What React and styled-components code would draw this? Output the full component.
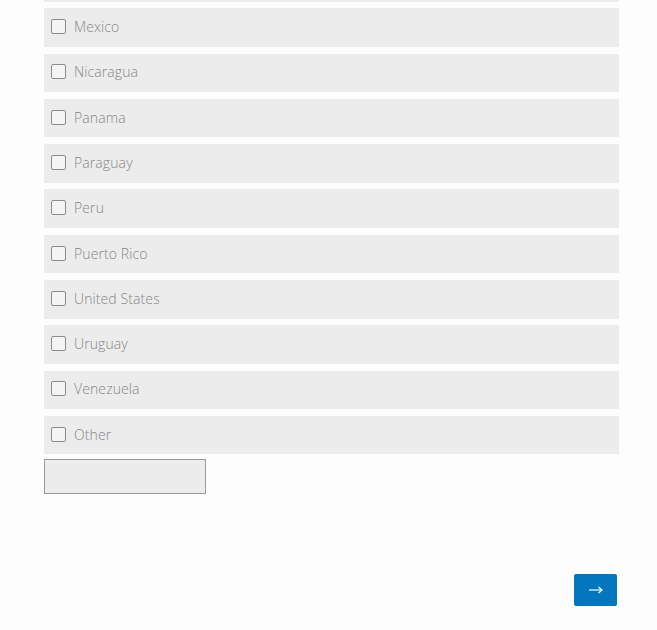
import React from 'react';
import styled, { createGlobalStyle } from 'styled-components';

const GlobalStyle = createGlobalStyle`
  html, body {
    margin: 0;
    padding: 0;
    background: #fdfdfd;
    overflow: hidden;
  }
  body {
    font-family: "Open Sans", "Noto Sans", sans-serif;
  }
`;

const Page = styled.div`
  width: 657px;
  height: 630px;
  padding-left: 44px;
  box-sizing: border-box;
  overflow: hidden;
`;

const Form = styled.div`
  width: 575px;
  margin-top: -37px;
  display: flex;
  flex-direction: column;
`;

const Options = styled.div`
  display: flex;
  flex-direction: column;
  gap: 6.8px;
`;

const Option = styled.label`
  display: flex;
  align-items: center;
  height: 38.5px;
  padding: 0 0 2px 7px;
  background: #ececec;
  box-sizing: border-box;
`;

const Box = styled.span`
  width: 13px;
  height: 13px;
  border: 1px solid #8c8c8c;
  border-radius: 2px;
  background: #f4f4f4;
  margin-right: 8px;
  flex-shrink: 0;
`;

const OptionText = styled.span`
  font-size: 14px;
  font-weight: 300;
  color: #878787;
  letter-spacing: 0.1px;
`;

const OtherInput = styled.input`
  margin-top: 5px;
  width: 162px;
  height: 35px;
  box-sizing: border-box;
  border: 1px solid #9a9a9a;
  background: #ececec;
  outline: none;
`;

const Footer = styled.div`
  display: flex;
  justify-content: flex-end;
  padding-right: 2px;
  margin-top: 80px;
`;

const NextButton = styled.button`
  display: flex;
  align-items: center;
  justify-content: center;
  width: 43px;
  height: 31.5px;
  border: none;
  border-radius: 2px;
  background: #0077bf;
  padding: 0;
  cursor: pointer;
`;

const ArrowIcon = () => (
  <svg width="14" height="8" viewBox="0 0 14 8" fill="none">
    <path d="M0 4H13" stroke="#fff" strokeWidth="1.2" />
    <path d="M9.5 1L13 4L9.5 7" stroke="#fff" strokeWidth="1.2" />
  </svg>
);

const countries = [
  '', 'Mexico', 'Nicaragua', 'Panama', 'Paraguay', 'Peru',
  'Puerto Rico', 'United States', 'Uruguay', 'Venezuela', 'Other',
];

export default function App() {
  return (
    <>
      <GlobalStyle />
      <Page>
        <Form>
          <Options>
            {countries.map((c, i) => (
              <Option key={i}>
                <Box />
                <OptionText>{c}</OptionText>
              </Option>
            ))}
          </Options>
          <OtherInput type="text" />
          <Footer>
            <NextButton aria-label="Next">
              <ArrowIcon />
            </NextButton>
          </Footer>
        </Form>
      </Page>
    </>
  );
}
